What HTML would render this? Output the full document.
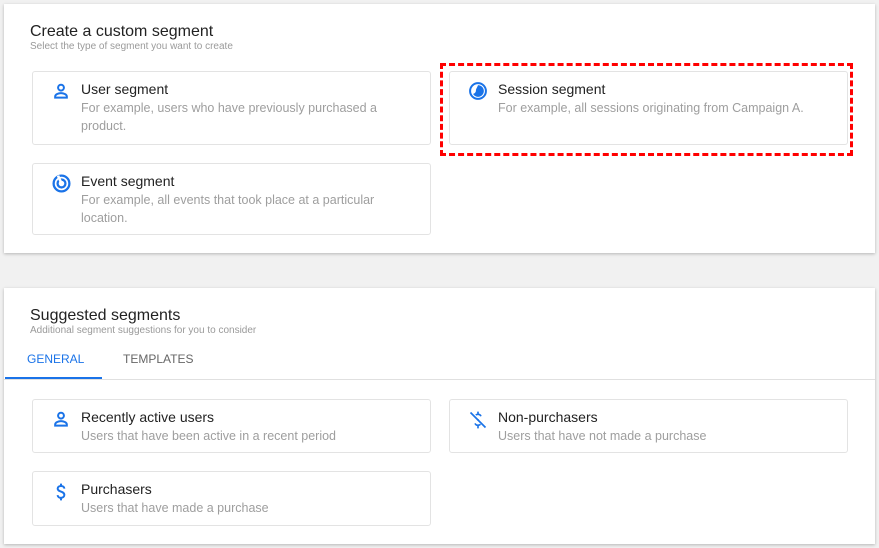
<!DOCTYPE html>
<html><head><style>
*{margin:0;padding:0;box-sizing:border-box}
body{width:879px;height:548px;background:#f1f1f1;font-family:"Liberation Sans",Arial,sans-serif;position:relative;overflow:hidden}
.panel{position:absolute;left:4px;width:871px;background:#fff;box-shadow:0 1px 3px rgba(0,0,0,.25)}
.h{position:absolute;left:26px;font-size:16px;color:#222}
.s{position:absolute;left:26px;font-size:10px;color:#9a9a9a}
.card{position:absolute;width:399px;border:1px solid #e3e3e3;border-radius:3px;background:#fff}
.card svg{position:absolute;left:18px;top:9px}
.t{position:absolute;left:48px;top:9px;font-size:14px;color:#222}
.d{position:absolute;left:48px;top:27px;font-size:12.5px;color:#9e9e9e;line-height:18px;width:305px}
.dash{position:absolute;left:440px;top:63px;width:413px;height:93px;border:3px dashed #f00}
</style></head><body>
<div class="panel" style="top:4px;height:249px">
<div class="h" style="top:19px">Create a custom segment</div>
<div class="s" style="top:37px">Select the type of segment you want to create</div>
</div>
<div class="card" style="left:32px;top:71px;height:74px">
<svg width="20" height="20" viewBox="0 0 24 24"><circle cx="12" cy="8" r="3.5" fill="none" stroke="#1a73e8" stroke-width="2.4"/><path d="M5 20v-1.5c0-2.5 4-4 7-4s7 1.5 7 4V20z" fill="none" stroke="#1a73e8" stroke-width="2.4"/></svg>
<div class="t">User segment</div><div class="d">For example, users who have previously purchased a product.</div></div>
<div class="card" style="left:32px;top:163px;height:72px">
<svg width="21" height="21" viewBox="0 0 24 24"><circle cx="12" cy="12" r="9" fill="none" stroke="#1a73e8" stroke-width="2.6"/><circle cx="12" cy="12" r="4.5" fill="none" stroke="#1a73e8" stroke-width="2.6"/><path d="M12 12L8 3" stroke="#fff" stroke-width="3"/></svg>
<div class="t">Event segment</div><div class="d">For example, all events that took place at a particular location.</div></div>
<div class="card" style="left:449px;top:71px;height:74px">
<svg width="20" height="20" viewBox="0 0 24 24"><circle cx="12" cy="12" r="9.5" fill="none" stroke="#1a73e8" stroke-width="2.4"/><path d="M12 5a7 7 0 1 1-6 10.5c2-.5 3.5-2 3.5-4S11 8 12 5z" fill="#1a73e8"/></svg>
<div class="t">Session segment</div><div class="d" style="width:340px">For example, all sessions originating from Campaign A.</div></div>
<div class="dash"></div>
<div class="panel" style="top:288px;height:256px">
<div class="h" style="top:19px">Suggested segments</div>
<div class="s" style="top:37px">Additional segment suggestions for you to consider</div>
<div style="position:absolute;left:23px;top:64px;font-size:12px;color:#1a73e8">GENERAL</div>
<div style="position:absolute;left:119px;top:64px;font-size:12px;color:#666">TEMPLATES</div>
<div style="position:absolute;left:0;top:91px;width:871px;height:1px;background:#e0e0e0"></div>
<div style="position:absolute;left:1px;top:89px;width:97px;height:2px;background:#1a73e8"></div>
</div>
<div class="card" style="left:32px;top:399px;height:54px">
<svg width="20" height="20" viewBox="0 0 24 24"><circle cx="12" cy="8" r="3.5" fill="none" stroke="#1a73e8" stroke-width="2.4"/><path d="M5 20v-1.5c0-2.5 4-4 7-4s7 1.5 7 4V20z" fill="none" stroke="#1a73e8" stroke-width="2.4"/></svg>
<div class="t">Recently active users</div><div class="d" style="width:340px">Users that have been active in a recent period</div></div>
<div class="card" style="left:449px;top:399px;height:54px">
<svg width="20" height="22" viewBox="0 0 24 24"><path d="M3 3l18 18" stroke="#1a73e8" stroke-width="2"/><path d="M15.5 7.5c-.5-1.5-2-2.3-3.5-2.3-1 0-2 .3-2.6.9M12 2v3M12 18v4M8.5 16c.5 1.5 2 2.3 3.5 2.3 1.2 0 2.3-.4 3-1.2M11 11.5l2 .8" fill="none" stroke="#1a73e8" stroke-width="2"/></svg>
<div class="t">Non-purchasers</div><div class="d" style="width:340px">Users that have not made a purchase</div></div>
<div class="card" style="left:32px;top:471px;height:55px">
<svg width="20" height="22" viewBox="0 0 24 24"><path d="M16 8c0-2-1.8-3.2-4-3.2S8 6 8 8c0 4.5 8 2.5 8 7.5 0 2-1.8 3.5-4 3.5s-4-1.3-4-3.3M12 2v3M12 19v3" fill="none" stroke="#1a73e8" stroke-width="2.4"/></svg>
<div class="t">Purchasers</div><div class="d" style="width:340px">Users that have made a purchase</div></div>
</body></html>
